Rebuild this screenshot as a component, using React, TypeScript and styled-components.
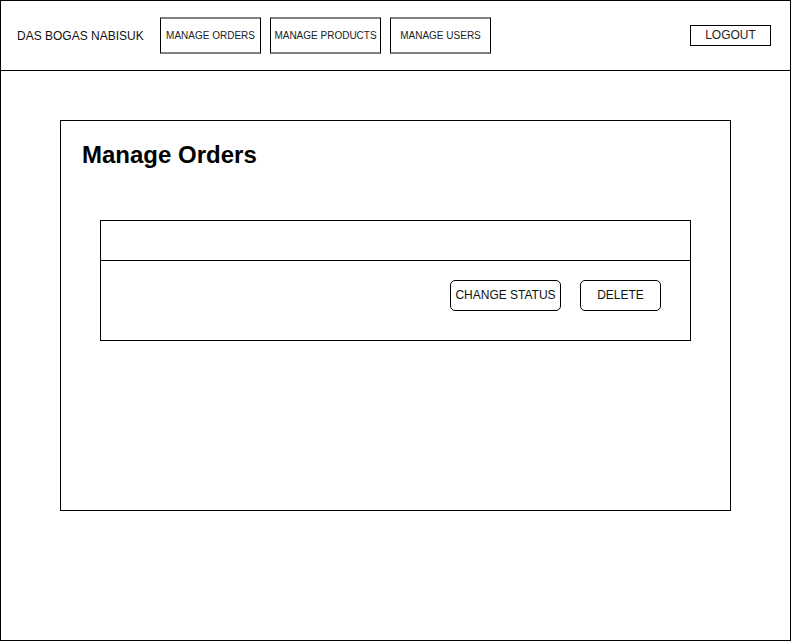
import { FC } from "react";
import styled, { createGlobalStyle } from "styled-components";

const GlobalStyle = createGlobalStyle`
  html, body {
    margin: 0;
    padding: 0;
    background: #fff;
  }
  body {
    font-family: "Liberation Sans", Arial, sans-serif;
    color: #000;
  }
  * {
    box-sizing: border-box;
  }
`;

const Frame = styled.div`
  width: 791px;
  height: 641px;
  border: 1px solid #000;
  display: flex;
  flex-direction: column;
  background: #fff;
`;

const Header = styled.header`
  height: 70px;
  flex: none;
  border-bottom: 1px solid #000;
  display: flex;
  align-items: center;
  padding: 0 19px 0 16px;
`;

const Brand = styled.div`
  width: 143px;
  font-size: 12px;
  line-height: 14px;
  white-space: nowrap;
  color: #111;
`;

const Nav = styled.nav`
  display: flex;
  gap: 9px;
`;

const NavButton = styled.button<{ $w: number }>`
  width: ${({ $w }) => $w}px;
  height: 37px;
  padding: 0;
  background: #fff;
  border-left: 1px solid #000;
  border-right: 1px solid #000;
  border-top: 2px solid #808080;
  border-bottom: 2px solid #808080;
  font-family: "Liberation Sans", Arial, sans-serif;
  font-size: 10px;
  color: #222;
  display: flex;
  align-items: center;
  justify-content: center;
  cursor: pointer;
`;

const Logout = styled.button`
  margin-left: auto;
  width: 81px;
  height: 21px;
  padding: 0 0 1px;
  background: #fff;
  border: 1px solid #000;
  font-family: "Liberation Sans", Arial, sans-serif;
  font-size: 12px;
  color: #222;
  cursor: pointer;
`;

const Main = styled.main`
  flex: 1;
  padding: 49px 0 0 59px;
`;

const Panel = styled.section`
  width: 671px;
  height: 391px;
  border: 1px solid #000;
  padding: 20px 0 0 21px;
`;

const Title = styled.h1`
  margin: 0;
  font-size: 24px;
  line-height: 28px;
  font-weight: bold;
`;

const Table = styled.div`
  margin: 51px 0 0 18px;
  width: 591px;
  height: 121px;
  border: 1px solid #000;
  display: flex;
  flex-direction: column;
`;

const TableHead = styled.div`
  height: 40px;
  flex: none;
  border-bottom: 1px solid #000;
`;

const TableRow = styled.div`
  flex: 1;
  display: flex;
  justify-content: flex-end;
  align-items: flex-start;
  gap: 19px;
  padding: 19px 29px 0 0;
`;

const ActionButton = styled.button<{ $w: number }>`
  width: ${({ $w }) => $w}px;
  height: 31px;
  padding: 0 0 2px;
  background: #fff;
  border: 1px solid #000;
  border-radius: 5px;
  font-family: "Liberation Sans", Arial, sans-serif;
  font-size: 12px;
  color: #111;
  cursor: pointer;
`;

const navItems = [
  { label: "MANAGE ORDERS", w: 101 },
  { label: "MANAGE PRODUCTS", w: 111 },
  { label: "MANAGE USERS", w: 101 },
];

const App: FC = () => {
  return (
    <>
      <GlobalStyle />
      <Frame>
        <Header>
          <Brand>DAS BOGAS NABISUK</Brand>
          <Nav>
            {navItems.map((n) => (
              <NavButton key={n.label} $w={n.w}>
                {n.label}
              </NavButton>
            ))}
          </Nav>
          <Logout>LOGOUT</Logout>
        </Header>
        <Main>
          <Panel>
            <Title>Manage Orders</Title>
            <Table>
              <TableHead />
              <TableRow>
                <ActionButton $w={111}>CHANGE STATUS</ActionButton>
                <ActionButton $w={81}>DELETE</ActionButton>
              </TableRow>
            </Table>
          </Panel>
        </Main>
      </Frame>
    </>
  );
};

export default App;
